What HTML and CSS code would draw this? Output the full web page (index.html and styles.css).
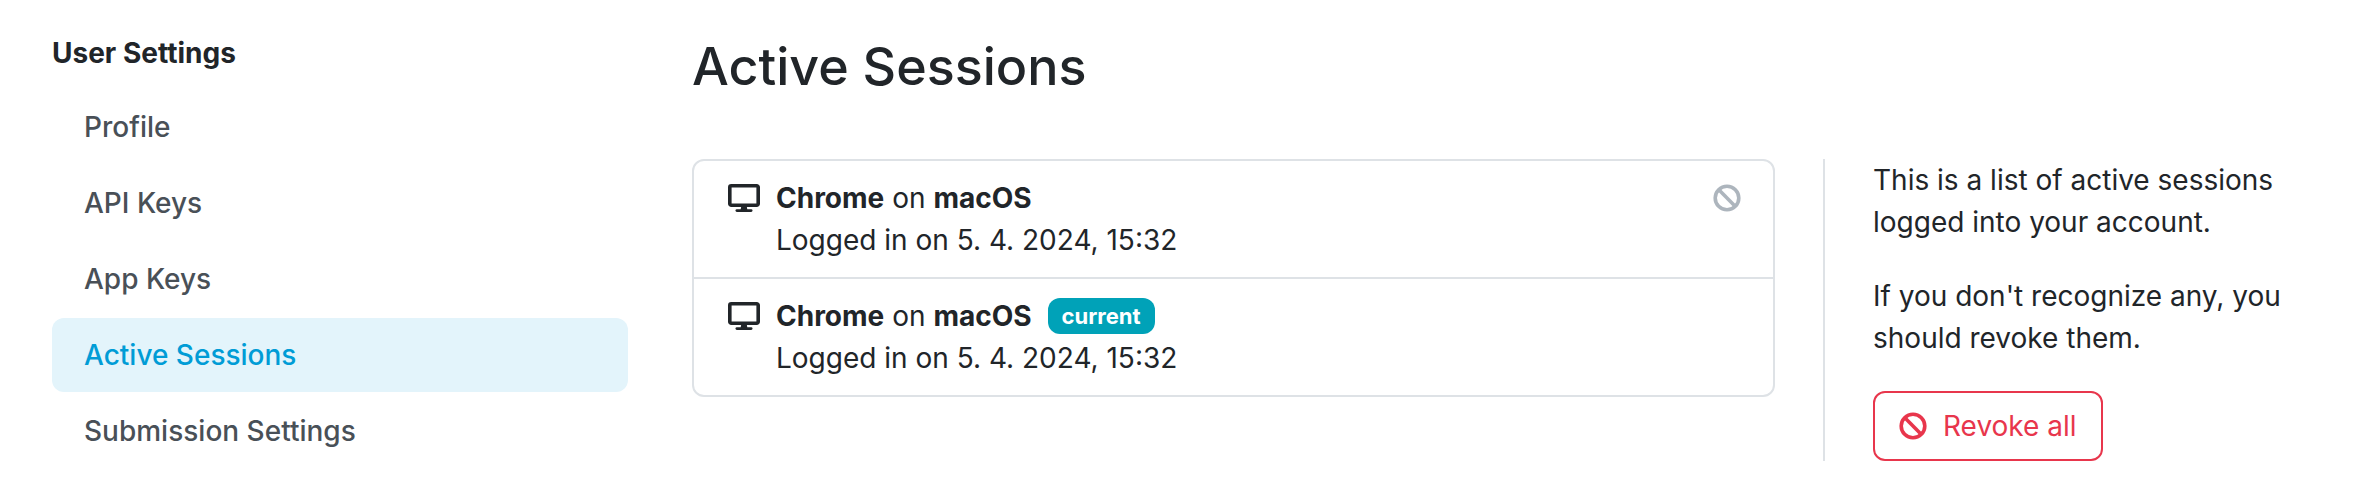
FILE: index.html
```html
<!DOCTYPE html>
<html lang="en">
<head>
<meta charset="utf-8">
<meta name="viewport" content="width=device-width, initial-scale=1">
<title>Active Sessions</title>
<link rel="stylesheet" href="styles.css">
</head>
<body>
<svg class="sprite" aria-hidden="true">
  <symbol id="desktop" viewBox="0 0 32 28">
    <path fill="none" stroke="currentColor" stroke-width="3.600" d="M3.300 1.800h25.400a1.500 1.500 0 0 1 1.500 1.500v16.400a1.500 1.500 0 0 1-1.500 1.500h-25.400a1.500 1.500 0 0 1-1.500-1.500v-16.400a1.500 1.500 0 0 1 1.500-1.500z"/>
    <path fill="currentColor" d="M13.300 22h5.400l.7 4h-6.800z"/>
    <path fill="none" stroke="currentColor" stroke-width="2.600" stroke-linecap="round" d="M8.800 26.600h14.400"/>
  </symbol>
  <symbol id="ban" viewBox="0 0 28 28">
    <circle cx="14" cy="14" r="11.800" fill="none" stroke="currentColor" stroke-width="3.600"/>
    <path fill="none" stroke="currentColor" stroke-width="3.600" d="M5.600 5.600l16.800 16.800"/>
  </symbol>
</svg>
<div class="page">
  <nav class="sidebar" aria-labelledby="nav-title">
    <h2 class="sidebar-title" id="nav-title">User Settings</h2>
    <ul class="nav-list">
      <li><a class="nav-link" href="#profile">Profile</a></li>
      <li><a class="nav-link" href="#api-keys">API Keys</a></li>
      <li><a class="nav-link" href="#app-keys">App Keys</a></li>
      <li><a class="nav-link nav-link-active" href="#sessions" aria-current="page">Active Sessions</a></li>
      <li><a class="nav-link" href="#submission">Submission Settings</a></li>
    </ul>
  </nav>
  <main class="content">
    <h1 class="title">Active Sessions</h1>
    <div class="columns">
      <ul class="sessions">
        <li class="session">
          <span class="session-icon"><svg class="icon-desktop" aria-hidden="true"><use href="#desktop"/></svg></span>
          <div class="session-body">
            <div class="session-name"><span><strong>Chrome</strong> on <strong>macOS</strong></span></div>
            <div>Logged in on 5. 4. 2024, 15:32</div>
          </div>
          <button class="revoke" type="button" aria-label="Revoke"><svg class="icon-ban" aria-hidden="true"><use href="#ban"/></svg></button>
        </li>
        <li class="session">
          <span class="session-icon"><svg class="icon-desktop" aria-hidden="true"><use href="#desktop"/></svg></span>
          <div class="session-body">
            <div class="session-name"><span><strong>Chrome</strong> on <strong>macOS</strong></span><span class="badge">current</span></div>
            <div>Logged in on 5. 4. 2024, 15:32</div>
          </div>
        </li>
      </ul>
      <aside class="help">
        <p>This is a list of active sessions logged into your account.</p>
        <p>If you don't recognize any, you should revoke them.</p>
        <button class="revoke-all" type="button"><svg class="icon-ban" aria-hidden="true"><use href="#ban"/></svg>Revoke all</button>
      </aside>
    </div>
  </main>
</div>
</body>
</html>
```
FILE: styles.css
```css
* {
  box-sizing: border-box;
}

body {
  margin: 0;
  background: #fff;
  color: #212529;
  font-family: Inter, "Liberation Sans", sans-serif;
  font-size: 28px;
  line-height: 42px;
}

h1, h2, p, ul {
  margin: 0;
  padding: 0;
}

ul {
  list-style: none;
}

.sprite {
  display: none;
}

.page {
  display: grid;
  grid-template-columns: minmax(0, 576fr) minmax(0, 1628fr);
  gap: 64px;
  padding: 32px 52px;
}

.sidebar {
  display: flex;
  flex-direction: column;
  gap: 16px;
}

.sidebar-title {
  font-size: 28px;
  font-weight: 700;
}

.nav-list {
  display: flex;
  flex-direction: column;
  gap: 2px;
}

.nav-link {
  display: block;
  padding: 16px 32px;
  border-radius: 12px;
  color: #495057;
  font-weight: 500;
  text-decoration: none;
}

.nav-link-active {
  background: #e3f4fb;
  color: #009cd6;
}

.title {
  margin-bottom: 57px;
  font-size: 52px;
  font-weight: 500;
  line-height: 70px;
}

.columns {
  display: grid;
  grid-template-columns: minmax(0, 1083fr) minmax(0, 497fr);
  gap: 48px;
  align-items: start;
}

.sessions {
  border: 2px solid #dee2e6;
  border-radius: 12px;
}

.session {
  display: flex;
  align-items: flex-start;
  gap: 14px;
  padding: 16px 32px;
}

.session + .session {
  border-top: 2px solid #dee2e6;
}

.session-icon,
.revoke {
  display: flex;
  align-items: center;
  justify-content: center;
  height: 42px;
}

.session-icon {
  width: 36px;
}

.session-body {
  flex: 1;
}

.session-name {
  display: flex;
  align-items: center;
  gap: 16px;
}

.icon-desktop {
  width: 32px;
  height: 28px;
}

.icon-ban {
  width: 28px;
  height: 28px;
}

.revoke {
  padding: 0;
  border: 0;
  background: none;
  color: #adb5bd;
}

.badge {
  padding: 6px 14px;
  border-radius: 12px;
  background: #00a2b8;
  color: #fff;
  font-size: 22px;
  font-weight: 700;
  line-height: 24px;
}

.help {
  display: flex;
  flex-direction: column;
  align-items: flex-start;
  gap: 32px;
  padding-left: 48px;
  border-left: 2px solid #dee2e6;
}

.revoke-all {
  display: flex;
  align-items: center;
  gap: 16px;
  padding: 12px 24px;
  border: 2px solid #e8364c;
  border-radius: 12px;
  background: none;
  color: #e8364c;
  font: inherit;
}
```
